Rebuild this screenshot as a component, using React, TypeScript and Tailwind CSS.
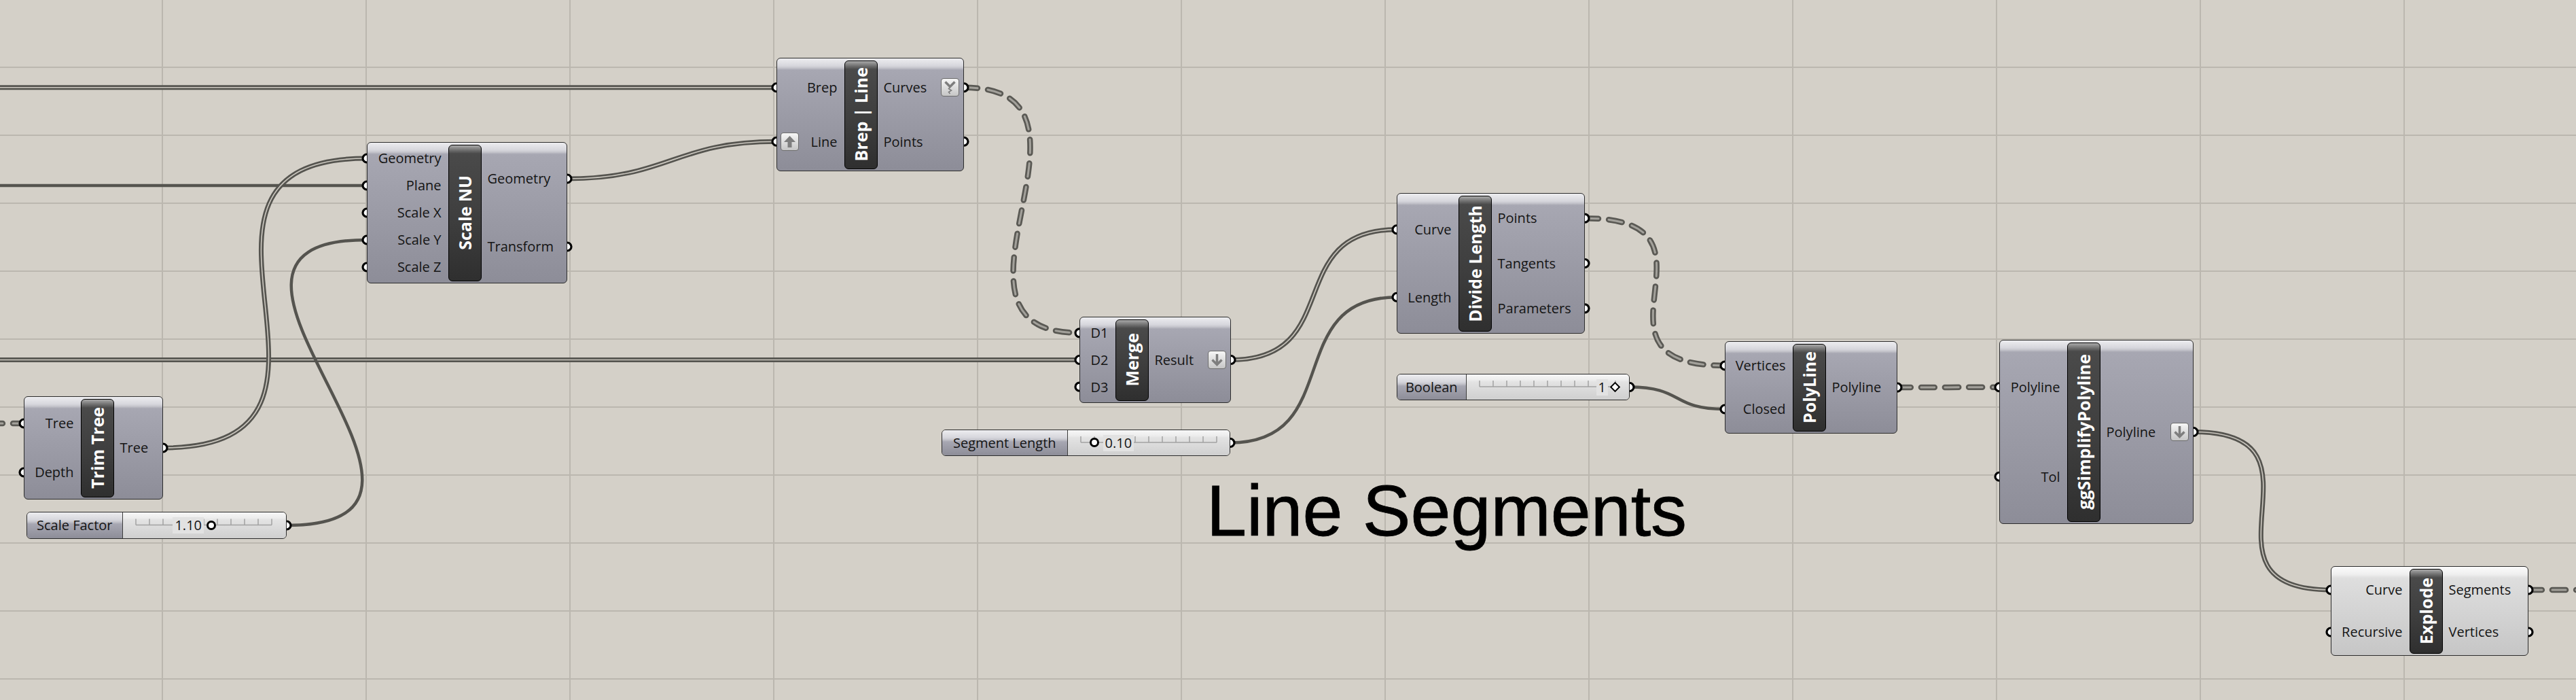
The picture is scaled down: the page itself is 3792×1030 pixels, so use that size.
import React from "react";

type Icon = "up" | "down" | "graft";
type Param = { label: string; icon?: Icon };
type NodeDef = {
  id: string;
  title: string;
  x: number;
  y: number;
  w: number;
  h: number;
  bar: number;
  inputs: Param[];
  outputs: Param[];
  light?: boolean;
};
type SliderDef = {
  id: string;
  label: string;
  x: number;
  y: number;
  w: number;
  h: number;
  lw: number;
  value: string;
  knob: number;
  diamond?: boolean;
  textLeft?: boolean;
};
type Pt = [number, number];

const p = (...labels: string[]): Param[] => labels.map((label) => ({ label }));

const NODES: NodeDef[] = [
  { id: "trim", title: "Trim Tree", x: 35, y: 583, w: 205, h: 152, bar: 84, inputs: p("Tree", "Depth"), outputs: p("Tree") },
  {
    id: "scale",
    title: "Scale NU",
    x: 540,
    y: 209,
    w: 295,
    h: 208,
    bar: 120,
    inputs: p("Geometry", "Plane", "Scale X", "Scale Y", "Scale Z"),
    outputs: p("Geometry", "Transform"),
  },
  {
    id: "brep",
    title: "Brep | Line",
    x: 1143,
    y: 85,
    w: 276,
    h: 167,
    bar: 100,
    inputs: [{ label: "Brep" }, { label: "Line", icon: "up" }],
    outputs: [{ label: "Curves", icon: "graft" }, { label: "Points" }],
  },
  {
    id: "merge",
    title: "Merge",
    x: 1589,
    y: 466,
    w: 223,
    h: 127,
    bar: 53,
    inputs: p("D1", "D2", "D3"),
    outputs: [{ label: "Result", icon: "down" }],
  },
  {
    id: "divide",
    title: "Divide Length",
    x: 2056,
    y: 284,
    w: 277,
    h: 207,
    bar: 91,
    inputs: p("Curve", "Length"),
    outputs: p("Points", "Tangents", "Parameters"),
  },
  { id: "poly", title: "PolyLine", x: 2539, y: 502, w: 254, h: 136, bar: 100, inputs: p("Vertices", "Closed"), outputs: p("Polyline") },
  {
    id: "simp",
    title: "ggSimplifyPolyline",
    x: 2943,
    y: 500,
    w: 286,
    h: 271,
    bar: 100,
    inputs: p("Polyline", "Tol"),
    outputs: [{ label: "Polyline", icon: "down" }],
  },
  {
    id: "explode",
    title: "Explode",
    x: 3431,
    y: 833,
    w: 291,
    h: 132,
    bar: 116,
    inputs: p("Curve", "Recursive"),
    outputs: p("Segments", "Vertices"),
    light: true,
  },
];

const SLIDERS: SliderDef[] = [
  { id: "sf", label: "Scale Factor", x: 39, y: 753, w: 383, h: 40, lw: 142, value: "1.10", knob: 0.555, textLeft: true },
  { id: "sl", label: "Segment Length", x: 1386, y: 632, w: 425, h: 39, lw: 186, value: "0.10", knob: 0.1 },
  { id: "bool", label: "Boolean", x: 2056, y: 550, w: 343, h: 39, lw: 103, value: "1", knob: 1, diamond: true, textLeft: true },
];

const N = Object.fromEntries(NODES.map((n) => [n.id, n])) as Record<string, NodeDef>;
const S = Object.fromEntries(SLIDERS.map((s) => [s.id, s])) as Record<string, SliderDef>;

const pinIn = (n: NodeDef, i: number): Pt => [n.x, n.y + 4 + ((i + 0.5) * (n.h - 8)) / n.inputs.length];
const pinOut = (n: NodeDef, i: number): Pt => [n.x + n.w, n.y + 4 + ((i + 0.5) * (n.h - 8)) / n.outputs.length];
const sliderOut = (s: SliderDef): Pt => [s.x + s.w, s.y + s.h / 2];

type Wire = { kind: "single" | "double" | "dashed"; a: Pt; b: Pt; d?: number };

const WIRES: Wire[] = [
  { kind: "double", a: [-20, pinIn(N.brep, 0)[1]], b: pinIn(N.brep, 0) },
  { kind: "single", a: [-20, pinIn(N.scale, 1)[1]], b: pinIn(N.scale, 1) },
  { kind: "double", a: [-20, pinIn(N.merge, 1)[1]], b: pinIn(N.merge, 1) },
  { kind: "dashed", a: [-16, pinIn(N.trim, 0)[1]], b: pinIn(N.trim, 0) },
  { kind: "double", a: pinOut(N.trim, 0), b: pinIn(N.scale, 0), d: 345 },
  { kind: "single", a: sliderOut(S.sf), b: pinIn(N.scale, 3), d: 330 },
  { kind: "double", a: pinOut(N.scale, 0), b: pinIn(N.brep, 1), d: 150 },
  { kind: "dashed", a: pinOut(N.brep, 0), b: pinIn(N.merge, 0), d: 240 },
  { kind: "double", a: pinOut(N.merge, 0), b: pinIn(N.divide, 0), d: 170 },
  { kind: "single", a: sliderOut(S.sl), b: pinIn(N.divide, 1), d: 170 },
  { kind: "dashed", a: pinOut(N.divide, 0), b: pinIn(N.poly, 0), d: 230 },
  { kind: "single", a: sliderOut(S.bool), b: pinIn(N.poly, 1), d: 80 },
  { kind: "dashed", a: pinOut(N.poly, 0), b: pinIn(N.simp, 0) },
  { kind: "double", a: pinOut(N.simp, 0), b: pinIn(N.explode, 0), d: 220 },
  { kind: "dashed", a: pinOut(N.explode, 0), b: [3830, pinOut(N.explode, 0)[1]] },
];

function wirePath({ a, b, d = 0 }: Wire) {
  return `M ${a[0]} ${a[1]} C ${a[0] + d} ${a[1]}, ${b[0] - d} ${b[1]}, ${b[0]} ${b[1]}`;
}

const WIRE_DARK = "#55544f";

function WireShape({ wire }: { wire: Wire }) {
  const d = wirePath(wire);
  if (wire.kind === "single") return <path d={d} fill="none" stroke={WIRE_DARK} strokeWidth={4.5} />;
  if (wire.kind === "double")
    return (
      <g fill="none">
        <path d={d} stroke={WIRE_DARK} strokeWidth={7} />
        <path d={d} stroke="#cdc9c1" strokeWidth={1.6} />
      </g>
    );
  return (
    <g fill="none" strokeLinecap="round">
      <path d={d} stroke="#5a5954" strokeWidth={8.5} strokeDasharray="20 15" />
      <path d={d} stroke="#a3a19b" strokeWidth={3} strokeDasharray="20 15" />
    </g>
  );
}

function ParamIcon({ icon }: { icon: Icon }) {
  return (
    <span className="flex h-[27px] w-[27px] shrink-0 items-center justify-center rounded-[4px] border border-[#6c6c6c] bg-[linear-gradient(180deg,#f6f6f6,#c6c6c6)]">
      <svg width="23" height="23" viewBox="0 0 23 23">
        {icon === "up" && <polygon points="11.5,3 20,12 14.5,12 14.5,20 8.5,20 8.5,12 3,12" fill="#7e7e7e" />}
        {icon === "down" && (
          <path d="M11.5 3 V18 M4.5 11.5 L11.5 18.5 L18.5 11.5" fill="none" stroke="#7e7e7e" strokeWidth={3.5} />
        )}
        {icon === "graft" && (
          <g fill="none" stroke="#7e7e7e">
            <path d="M4.5 3.5 L11.5 10.5 L18.5 3.5" strokeWidth={3.5} />
            <path d="M11.5 11 L9.5 13.5 L13.5 16 L9.5 18.5 L11.5 21" strokeWidth={1.6} />
          </g>
        )}
      </svg>
    </span>
  );
}

const NODE_BG =
  "bg-[linear-gradient(180deg,#ededf0_0px,#d6d6dc_11px,#c4c4cb_14px,#a7a7b2_17px,#8d8d98_100%)]";
const NODE_BG_LIGHT =
  "bg-[linear-gradient(180deg,#fbfbfb_0px,#efefef_11px,#e6e6e6_14px,#dedede_17px,#c6c6c6_100%)]";

function Node({ n }: { n: NodeDef }) {
  return (
    <div
      className={`absolute flex rounded-[6px] border-[1.5px] border-[#2c2c2c] font-['Open_Sans',sans-serif] text-[20px] leading-none text-[#141414] ${
        n.light ? NODE_BG_LIGHT : NODE_BG
      }`}
      style={{ left: n.x, top: n.y, width: n.w, height: n.h }}
    >
      <div className="flex shrink-0 flex-col py-[2.5px]" style={{ width: n.bar - 1.5 }}>
        {n.inputs.map((it) => (
          <div
            key={it.label}
            className={`flex flex-1 items-center pr-[10px] ${it.icon ? "justify-between pl-[4.5px]" : "justify-end"}`}
          >
            {it.icon && <ParamIcon icon={it.icon} />}
            <span>{it.label}</span>
          </div>
        ))}
      </div>
      <div className="my-[2.5px] flex w-[49px] shrink-0 items-center justify-center rounded-[6px] border-[1.5px] border-black bg-[linear-gradient(180deg,#a9a9a9_0px,#707070_7px,#4a4a4a_12px,#3e3e3e_55%,#2f2f2f_100%)]">
        <span className="rotate-180 whitespace-nowrap text-[25px] font-bold text-white [writing-mode:vertical-rl]">
          {n.title}
        </span>
      </div>
      <div className="flex flex-1 flex-col py-[2.5px]">
        {n.outputs.map((it) => (
          <div key={it.label} className="flex flex-1 items-center justify-between pl-[9px] pr-[6px]">
            <span>{it.label}</span>
            {it.icon && <ParamIcon icon={it.icon} />}
          </div>
        ))}
      </div>
    </div>
  );
}

function Slider({ s }: { s: SliderDef }) {
  const secW = s.w - s.lw - 3;
  const inner = s.h - 3;
  const mid = inner / 2;
  const rail0 = 19;
  const knobX = rail0 + s.knob * 200;
  return (
    <div
      className="absolute flex overflow-hidden rounded-[6px] border-[1.5px] border-[#2c2c2c] font-['Open_Sans',sans-serif] text-[20px] leading-none text-[#141414]"
      style={{ left: s.x, top: s.y, width: s.w, height: s.h }}
    >
      <div className={`flex shrink-0 items-center justify-center border-r-[1.5px] border-[#3c3c3c] ${NODE_BG}`} style={{ width: s.lw - 1.5 }}>
        <span className="whitespace-nowrap">{s.label}</span>
      </div>
      <div className="relative flex-1 bg-[linear-gradient(180deg,#f7f7f7_0px,#ededed_8px,#e3e3e3_11px,#cfcfcf_100%)]">
        <svg className="absolute left-0 top-0" width={secW} height={inner}>
          <g stroke="#a2a2a2" strokeWidth={1.5}>
            <line x1={rail0} y1={mid} x2={rail0 + 200} y2={mid} />
            {Array.from({ length: 11 }, (_, i) => (
              <line key={i} x1={rail0 + i * 20} y1={mid - 9} x2={rail0 + i * 20} y2={mid} />
            ))}
          </g>
        </svg>
        <span
          className="absolute top-1/2 -translate-y-1/2 bg-[#e2e2e2] px-[3px] py-[2px]"
          style={s.textLeft ? { right: secW - knobX + 13 } : { left: knobX + 13 }}
        >
          {s.value}
        </span>
        {s.diamond ? (
          <span
            className="absolute h-[11px] w-[11px] rotate-45 border-[2.5px] border-black bg-white"
            style={{ left: knobX - 5.5, top: mid - 5.5 }}
          />
        ) : (
          <span
            className="absolute h-[14px] w-[14px] rounded-full border-[3.5px] border-black bg-white"
            style={{ left: knobX - 7, top: mid - 7 }}
          />
        )}
      </div>
    </div>
  );
}

const V_LINES = Array.from({ length: 14 }, (_, k) => -61 + k * 300);
const H_LINES = Array.from({ length: 12 }, (_, k) => -1 + k * 100);

export default function App() {
  const grips: Pt[] = [
    ...NODES.flatMap((n) => [...n.inputs.map((_, i) => pinIn(n, i)), ...n.outputs.map((_, i) => pinOut(n, i))]),
    ...SLIDERS.map(sliderOut),
  ];

  return (
    <div className="relative h-[1030px] w-[3792px] overflow-hidden bg-[#d4d0c8]">
      <svg className="absolute left-0 top-0" width={3792} height={1030}>
        <g stroke="#bbb7af" strokeWidth={2}>
          {V_LINES.map((x) => (
            <line key={`v${x}`} x1={x} y1={0} x2={x} y2={1030} />
          ))}
          {H_LINES.map((y) => (
            <line key={`h${y}`} x1={0} y1={y} x2={3792} y2={y} />
          ))}
        </g>
        {WIRES.map((w, i) => (
          <WireShape key={i} wire={w} />
        ))}
        {grips.map(([x, y], i) => (
          <circle key={i} cx={x} cy={y} r={6} fill="#fff" stroke="#000" strokeWidth={3.2} />
        ))}
      </svg>

      {NODES.map((n) => (
        <Node key={n.id} n={n} />
      ))}
      {SLIDERS.map((s) => (
        <Slider key={s.id} s={s} />
      ))}

      <div className="absolute left-[1776px] top-[698px] whitespace-nowrap font-['Liberation_Sans',Arial,sans-serif] text-[106px] leading-none text-black [-webkit-text-stroke:0.8px_black]">
        Line Segments
      </div>
    </div>
  );
}
